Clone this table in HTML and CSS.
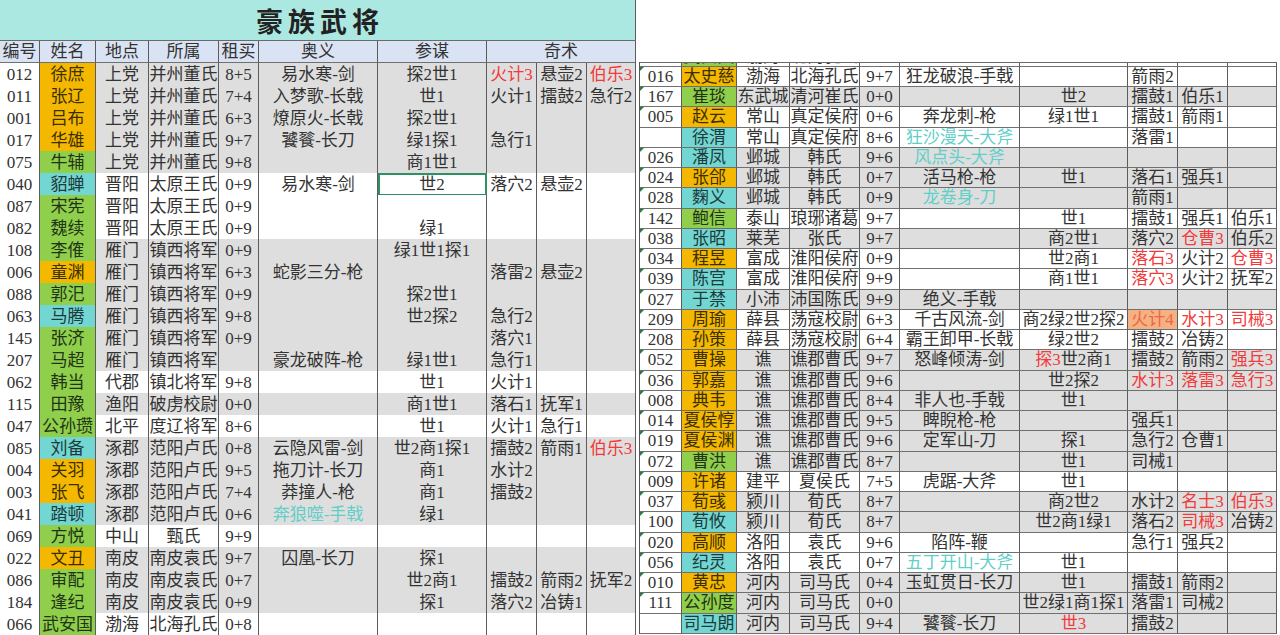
FILE: index.html
```html
<!DOCTYPE html>
<html lang="zh-CN">
<head>
<meta charset="utf-8">
<title>豪族武将</title>
<link rel="stylesheet" href="styles.css">
</head>
<body>
<div class="page">
  <section class="left">
    <div class="title">豪族武将</div>
    <div class="lt">
      <div class="row hdr"><div class="c">编号</div><div class="c">姓名</div><div class="c">地点</div><div class="c">所属</div><div class="c">租买</div><div class="c">奥义</div><div class="c">参谋</div><div class="c span3">奇术</div></div>
      <div class="row gy"><div class="c id">012</div><div class="c nm o">徐庶</div><div class="c">上党</div><div class="c">并州董氏</div><div class="c">8+5</div><div class="c">易水寒-剑</div><div class="c">探2世1</div><div class="c red">火计3</div><div class="c">悬壶2</div><div class="c red">伯乐3</div></div>
      <div class="row gy"><div class="c id">011</div><div class="c nm o">张辽</div><div class="c">上党</div><div class="c">并州董氏</div><div class="c">7+4</div><div class="c">入梦歌-长戟</div><div class="c">世1</div><div class="c">火计1</div><div class="c">擂鼓2</div><div class="c">急行2</div></div>
      <div class="row gy"><div class="c id">001</div><div class="c nm o">吕布</div><div class="c">上党</div><div class="c">并州董氏</div><div class="c">6+3</div><div class="c">燎原火-长戟</div><div class="c">探2世1</div><div class="c"></div><div class="c"></div><div class="c"></div></div>
      <div class="row gy"><div class="c id">017</div><div class="c nm o">华雄</div><div class="c">上党</div><div class="c">并州董氏</div><div class="c">9+7</div><div class="c">饕餮-长刀</div><div class="c">绿1探1</div><div class="c">急行1</div><div class="c"></div><div class="c"></div></div>
      <div class="row gy"><div class="c id">075</div><div class="c nm g">牛辅</div><div class="c">上党</div><div class="c">并州董氏</div><div class="c">9+8</div><div class="c"></div><div class="c">商1世1</div><div class="c"></div><div class="c"></div><div class="c"></div></div>
      <div class="row"><div class="c id">040</div><div class="c nm t">貂蝉</div><div class="c">晋阳</div><div class="c">太原王氏</div><div class="c">0+9</div><div class="c">易水寒-剑</div><div class="c sel">世2</div><div class="c">落穴2</div><div class="c">悬壶2</div><div class="c"></div></div>
      <div class="row"><div class="c id">087</div><div class="c nm g">宋宪</div><div class="c">晋阳</div><div class="c">太原王氏</div><div class="c">0+9</div><div class="c"></div><div class="c"></div><div class="c"></div><div class="c"></div><div class="c"></div></div>
      <div class="row"><div class="c id">082</div><div class="c nm g">魏续</div><div class="c">晋阳</div><div class="c">太原王氏</div><div class="c">0+9</div><div class="c"></div><div class="c">绿1</div><div class="c"></div><div class="c"></div><div class="c"></div></div>
      <div class="row gy"><div class="c id">108</div><div class="c nm g">李傕</div><div class="c">雁门</div><div class="c">镇西将军</div><div class="c">0+9</div><div class="c"></div><div class="c">绿1世1探1</div><div class="c"></div><div class="c"></div><div class="c"></div></div>
      <div class="row gy"><div class="c id">006</div><div class="c nm o">童渊</div><div class="c">雁门</div><div class="c">镇西将军</div><div class="c">6+3</div><div class="c">蛇影三分-枪</div><div class="c"></div><div class="c">落雷2</div><div class="c">悬壶2</div><div class="c"></div></div>
      <div class="row gy"><div class="c id">088</div><div class="c nm g">郭汜</div><div class="c">雁门</div><div class="c">镇西将军</div><div class="c">0+9</div><div class="c"></div><div class="c">探2世1</div><div class="c"></div><div class="c"></div><div class="c"></div></div>
      <div class="row gy"><div class="c id">063</div><div class="c nm t">马腾</div><div class="c">雁门</div><div class="c">镇西将军</div><div class="c">9+8</div><div class="c"></div><div class="c">世2探2</div><div class="c">急行2</div><div class="c"></div><div class="c"></div></div>
      <div class="row gy"><div class="c id">145</div><div class="c nm g">张济</div><div class="c">雁门</div><div class="c">镇西将军</div><div class="c">0+9</div><div class="c"></div><div class="c"></div><div class="c">落穴1</div><div class="c"></div><div class="c"></div></div>
      <div class="row gy"><div class="c id">207</div><div class="c nm g">马超</div><div class="c">雁门</div><div class="c">镇西将军</div><div class="c"></div><div class="c">豪龙破阵-枪</div><div class="c">绿1世1</div><div class="c">急行1</div><div class="c"></div><div class="c"></div></div>
      <div class="row"><div class="c id">062</div><div class="c nm g">韩当</div><div class="c">代郡</div><div class="c">镇北将军</div><div class="c">9+8</div><div class="c"></div><div class="c">世1</div><div class="c">火计1</div><div class="c"></div><div class="c"></div></div>
      <div class="row gy"><div class="c id">115</div><div class="c nm g">田豫</div><div class="c">渔阳</div><div class="c">破虏校尉</div><div class="c">0+0</div><div class="c"></div><div class="c">商1世1</div><div class="c">落石1</div><div class="c">抚军1</div><div class="c"></div></div>
      <div class="row"><div class="c id">047</div><div class="c nm g">公孙瓒</div><div class="c">北平</div><div class="c">度辽将军</div><div class="c">8+6</div><div class="c"></div><div class="c">世1</div><div class="c">火计1</div><div class="c">急行1</div><div class="c"></div></div>
      <div class="row gy"><div class="c id">085</div><div class="c nm t">刘备</div><div class="c">涿郡</div><div class="c">范阳卢氏</div><div class="c">0+8</div><div class="c">云隐风雷-剑</div><div class="c">世2商1探1</div><div class="c">擂鼓2</div><div class="c">箭雨1</div><div class="c red">伯乐3</div></div>
      <div class="row gy"><div class="c id">004</div><div class="c nm o">关羽</div><div class="c">涿郡</div><div class="c">范阳卢氏</div><div class="c">9+5</div><div class="c">拖刀计-长刀</div><div class="c">商1</div><div class="c">水计2</div><div class="c"></div><div class="c"></div></div>
      <div class="row gy"><div class="c id">003</div><div class="c nm o">张飞</div><div class="c">涿郡</div><div class="c">范阳卢氏</div><div class="c">7+4</div><div class="c">莽撞人-枪</div><div class="c">商1</div><div class="c">擂鼓2</div><div class="c"></div><div class="c"></div></div>
      <div class="row gy"><div class="c id">041</div><div class="c nm t">踏顿</div><div class="c">涿郡</div><div class="c">范阳卢氏</div><div class="c">0+6</div><div class="c teal">奔狼噬-手戟</div><div class="c">绿1</div><div class="c"></div><div class="c"></div><div class="c"></div></div>
      <div class="row"><div class="c id">069</div><div class="c nm g">方悦</div><div class="c">中山</div><div class="c">甄氏</div><div class="c">9+9</div><div class="c"></div><div class="c"></div><div class="c"></div><div class="c"></div><div class="c"></div></div>
      <div class="row gy"><div class="c id">022</div><div class="c nm o">文丑</div><div class="c">南皮</div><div class="c">南皮袁氏</div><div class="c">9+7</div><div class="c">囚凰-长刀</div><div class="c">探1</div><div class="c"></div><div class="c"></div><div class="c"></div></div>
      <div class="row gy"><div class="c id">086</div><div class="c nm g">审配</div><div class="c">南皮</div><div class="c">南皮袁氏</div><div class="c">0+7</div><div class="c"></div><div class="c">世2商1</div><div class="c">擂鼓2</div><div class="c">箭雨2</div><div class="c">抚军2</div></div>
      <div class="row gy"><div class="c id">184</div><div class="c nm g">逢纪</div><div class="c">南皮</div><div class="c">南皮袁氏</div><div class="c">0+9</div><div class="c"></div><div class="c">探1</div><div class="c">落穴2</div><div class="c">冶铸1</div><div class="c"></div></div>
      <div class="row"><div class="c id">066</div><div class="c nm g">武安国</div><div class="c">渤海</div><div class="c">北海孔氏</div><div class="c">0+8</div><div class="c"></div><div class="c"></div><div class="c"></div><div class="c"></div><div class="c"></div></div>
    </div>
  </section>

  <section class="right">
    <div class="rt">
      <div class="partial">
        <div class="row"><div class="c id n">066</div><div class="c nm g">武安国</div><div class="c">渤海</div><div class="c">北海孔氏</div><div class="c">0+8</div><div class="c"></div><div class="c"></div><div class="c"></div><div class="c"></div><div class="c"></div></div>
      </div>
      <div class="row"><div class="c id n">016</div><div class="c nm o">太史慈</div><div class="c">渤海</div><div class="c">北海孔氏</div><div class="c">9+7</div><div class="c">狂龙破浪-手戟</div><div class="c"></div><div class="c">箭雨2</div><div class="c"></div><div class="c"></div></div>
      <div class="row gy"><div class="c id n">167</div><div class="c nm g">崔琰</div><div class="c">东武城</div><div class="c">清河崔氏</div><div class="c">0+0</div><div class="c"></div><div class="c">世2</div><div class="c">擂鼓1</div><div class="c">伯乐1</div><div class="c"></div></div>
      <div class="row"><div class="c id n">005</div><div class="c nm o">赵云</div><div class="c">常山</div><div class="c">真定侯府</div><div class="c">0+6</div><div class="c">奔龙刺-枪</div><div class="c">绿1世1</div><div class="c">擂鼓1</div><div class="c">箭雨1</div><div class="c"></div></div>
      <div class="row"><div class="c id"></div><div class="c nm t">徐渭</div><div class="c">常山</div><div class="c">真定侯府</div><div class="c">8+6</div><div class="c teal">狂沙漫天-大斧</div><div class="c"></div><div class="c">落雷1</div><div class="c"></div><div class="c"></div></div>
      <div class="row gy"><div class="c id n">026</div><div class="c nm t">潘凤</div><div class="c">邺城</div><div class="c">韩氏</div><div class="c">9+6</div><div class="c teal">风点头-大斧</div><div class="c"></div><div class="c"></div><div class="c"></div><div class="c"></div></div>
      <div class="row gy"><div class="c id n">024</div><div class="c nm o">张郃</div><div class="c">邺城</div><div class="c">韩氏</div><div class="c">0+7</div><div class="c">活马枪-枪</div><div class="c">世1</div><div class="c">落石1</div><div class="c">强兵1</div><div class="c"></div></div>
      <div class="row gy"><div class="c id n">028</div><div class="c nm t">麴义</div><div class="c">邺城</div><div class="c">韩氏</div><div class="c">0+9</div><div class="c teal">龙卷身-刀</div><div class="c"></div><div class="c">箭雨1</div><div class="c"></div><div class="c"></div></div>
      <div class="row"><div class="c id n">142</div><div class="c nm g">鲍信</div><div class="c">泰山</div><div class="c">琅琊诸葛</div><div class="c">9+7</div><div class="c"></div><div class="c">世1</div><div class="c">擂鼓1</div><div class="c">强兵1</div><div class="c">伯乐1</div></div>
      <div class="row gy"><div class="c id n">038</div><div class="c nm t">张昭</div><div class="c">莱芜</div><div class="c">张氏</div><div class="c">9+7</div><div class="c"></div><div class="c">商2世1</div><div class="c">落穴2</div><div class="c red">仓曹3</div><div class="c">伯乐2</div></div>
      <div class="row"><div class="c id n">034</div><div class="c nm o">程昱</div><div class="c">富成</div><div class="c">淮阳侯府</div><div class="c">0+9</div><div class="c"></div><div class="c">世2商1</div><div class="c red">落石3</div><div class="c">火计2</div><div class="c red">仓曹3</div></div>
      <div class="row"><div class="c id n">039</div><div class="c nm t">陈宫</div><div class="c">富成</div><div class="c">淮阳侯府</div><div class="c">9+9</div><div class="c"></div><div class="c">商1世1</div><div class="c red">落穴3</div><div class="c">火计2</div><div class="c">抚军2</div></div>
      <div class="row gy"><div class="c id n">027</div><div class="c nm t">于禁</div><div class="c">小沛</div><div class="c">沛国陈氏</div><div class="c">9+9</div><div class="c">绝义-手戟</div><div class="c"></div><div class="c"></div><div class="c"></div><div class="c"></div></div>
      <div class="row"><div class="c id n">209</div><div class="c nm o">周瑜</div><div class="c">薛县</div><div class="c">荡寇校尉</div><div class="c">6+3</div><div class="c">千古风流-剑</div><div class="c">商2绿2世2探2</div><div class="c hot">火计4</div><div class="c red">水计3</div><div class="c red">司械3</div></div>
      <div class="row"><div class="c id n">208</div><div class="c nm o">孙策</div><div class="c">薛县</div><div class="c">荡寇校尉</div><div class="c">6+4</div><div class="c">霸王卸甲-长戟</div><div class="c">绿2世2</div><div class="c">擂鼓2</div><div class="c">冶铸2</div><div class="c"></div></div>
      <div class="row gy"><div class="c id n">052</div><div class="c nm o">曹操</div><div class="c">谯</div><div class="c">谯郡曹氏</div><div class="c">9+7</div><div class="c">怒峰倾涛-剑</div><div class="c"><span class="red">探3</span>世2商1</div><div class="c">擂鼓2</div><div class="c">箭雨2</div><div class="c red">强兵3</div></div>
      <div class="row gy"><div class="c id n">036</div><div class="c nm o">郭嘉</div><div class="c">谯</div><div class="c">谯郡曹氏</div><div class="c">9+6</div><div class="c"></div><div class="c">世2探2</div><div class="c red">水计3</div><div class="c red">落雷3</div><div class="c red">急行3</div></div>
      <div class="row gy"><div class="c id n">008</div><div class="c nm o">典韦</div><div class="c">谯</div><div class="c">谯郡曹氏</div><div class="c">8+4</div><div class="c">非人也-手戟</div><div class="c">世1</div><div class="c"></div><div class="c"></div><div class="c"></div></div>
      <div class="row gy"><div class="c id n">014</div><div class="c nm o">夏侯惇</div><div class="c">谯</div><div class="c">谯郡曹氏</div><div class="c">9+5</div><div class="c">睥睨枪-枪</div><div class="c"></div><div class="c">强兵1</div><div class="c"></div><div class="c"></div></div>
      <div class="row gy"><div class="c id n">019</div><div class="c nm o">夏侯渊</div><div class="c">谯</div><div class="c">谯郡曹氏</div><div class="c">9+6</div><div class="c">定军山-刀</div><div class="c">探1</div><div class="c">急行2</div><div class="c">仓曹1</div><div class="c"></div></div>
      <div class="row gy"><div class="c id n">072</div><div class="c nm g">曹洪</div><div class="c">谯</div><div class="c">谯郡曹氏</div><div class="c">8+7</div><div class="c"></div><div class="c">世1</div><div class="c">司械1</div><div class="c"></div><div class="c"></div></div>
      <div class="row"><div class="c id n">009</div><div class="c nm o">许诸</div><div class="c">建平</div><div class="c">夏侯氏</div><div class="c">7+5</div><div class="c">虎踞-大斧</div><div class="c">世1</div><div class="c"></div><div class="c"></div><div class="c"></div></div>
      <div class="row gy"><div class="c id n">037</div><div class="c nm o">荀彧</div><div class="c">颍川</div><div class="c">荀氏</div><div class="c">8+7</div><div class="c"></div><div class="c">商2世2</div><div class="c">水计2</div><div class="c red">名士3</div><div class="c red">伯乐3</div></div>
      <div class="row gy"><div class="c id n">100</div><div class="c nm t">荀攸</div><div class="c">颍川</div><div class="c">荀氏</div><div class="c">8+7</div><div class="c"></div><div class="c">世2商1绿1</div><div class="c">落石2</div><div class="c red">司械3</div><div class="c">冶铸2</div></div>
      <div class="row"><div class="c id n">020</div><div class="c nm o">高顺</div><div class="c">洛阳</div><div class="c">袁氏</div><div class="c">9+6</div><div class="c">陷阵-鞭</div><div class="c"></div><div class="c">急行1</div><div class="c">强兵2</div><div class="c"></div></div>
      <div class="row"><div class="c id n">056</div><div class="c nm t">纪灵</div><div class="c">洛阳</div><div class="c">袁氏</div><div class="c">0+7</div><div class="c teal">五丁开山-大斧</div><div class="c">世1</div><div class="c"></div><div class="c"></div><div class="c"></div></div>
      <div class="row gy"><div class="c id n">010</div><div class="c nm o">黄忠</div><div class="c">河内</div><div class="c">司马氏</div><div class="c">0+4</div><div class="c">玉虹贯日-长刀</div><div class="c">世1</div><div class="c">擂鼓1</div><div class="c">箭雨2</div><div class="c"></div></div>
      <div class="row gy"><div class="c id n">111</div><div class="c nm g">公孙度</div><div class="c">河内</div><div class="c">司马氏</div><div class="c">0+0</div><div class="c"></div><div class="c">世2绿1商1探1</div><div class="c">落雷1</div><div class="c">司械2</div><div class="c"></div></div>
      <div class="row gy"><div class="c id"></div><div class="c nm t">司马朗</div><div class="c">河内</div><div class="c">司马氏</div><div class="c">9+4</div><div class="c">饕餮-长刀</div><div class="c red">世3</div><div class="c">擂鼓2</div><div class="c"></div><div class="c"></div></div>
    </div>
  </section>
</div>
</body>
</html>
```

FILE: styles.css
```css
* { box-sizing: border-box; }

body {
  margin: 0;
  width: 1280px;
  height: 635px;
  overflow: hidden;
  background: #ffffff;
  color: #333333;
  font-family: "Liberation Serif", "Noto Sans CJK SC", serif;
  font-size: 17px;
}

.page {
  display: flex;
  align-items: flex-start;
}

/* ---------- left sheet ---------- */
.left {
  width: 636px;
  flex: none;
}

.title {
  height: 40px;
  background: #abe8e1;
  border-right: 1px solid #5a5a5a;
  display: flex;
  align-items: center;
  justify-content: center;
  padding-left: 5px;
  font-family: "Noto Sans CJK SC", sans-serif;
  font-size: 27px;
  font-weight: 700;
  letter-spacing: 5px;
  color: #222222;
}

.lt {
  --cols: 40px 56px 53px 70px 40px 119px 109px 50px 50px 49px;
}

.lt .row {
  display: grid;
  grid-template-columns: var(--cols);
  height: 22px;
}

.lt .c {
  line-height: 20px;
  padding-top: 2px;
}

.lt .row.hdr {
  height: 23px;
  border-top: 1px solid #6a6a6a;
}

.lt .row.hdr .c {
  background: #dae3f3;
  line-height: 21px;
  padding-top: 0;
}

.span3 { grid-column: span 3; }

/* ---------- right sheet ---------- */
.right {
  flex: none;
  margin-left: 3px;
  padding-top: 62px;
}

.rt {
  --cols: 42px 55px 53px 70px 40px 120px 108px 50px 50px 49px;
  border-left: 1px solid #555555;
  width: 638px;
}

.rt .row {
  display: grid;
  grid-template-columns: var(--cols);
  height: 20px;
}

.rt > .row:nth-child(4n) {
  height: 21px;
}

.rt .c {
  line-height: 19px;
  padding-top: 0;
}

.partial {
  height: 5px;
  overflow: hidden;
  border-top: 1px solid #6a6a6a;
}

.partial .row {
  margin-top: -16px;
}

/* ---------- cells ---------- */
.c {
  border-right: 1px solid #5c5c5c;
  border-bottom: 1px solid #707070;
  text-align: center;
  white-space: nowrap;
  background: #ffffff;
}

.row.gy .c { background: #dedede; }
.row .c.id { background: #ffffff; }

.c.id.n { position: relative; }
.c.id.n::before {
  content: "";
  position: absolute;
  left: 0;
  top: 0;
  border-top: 4px solid #2b7a3f;
  border-right: 4px solid transparent;
}

.row .c.nm.o { background: #f5b800; color: #3b2f00; }
.row .c.nm.g { background: #8fcf4c; color: #223315; }
.row .c.nm.t { background: #72d7d3; color: #1f3a3a; }

.red { color: #f23a3a; }
.teal { color: #5fcfc8; }

.row .c.hot { background: #f4b183; color: #f0663f; }

.c.sel {
  outline: 2px solid #2f9163;
  outline-offset: -2px;
}
```
